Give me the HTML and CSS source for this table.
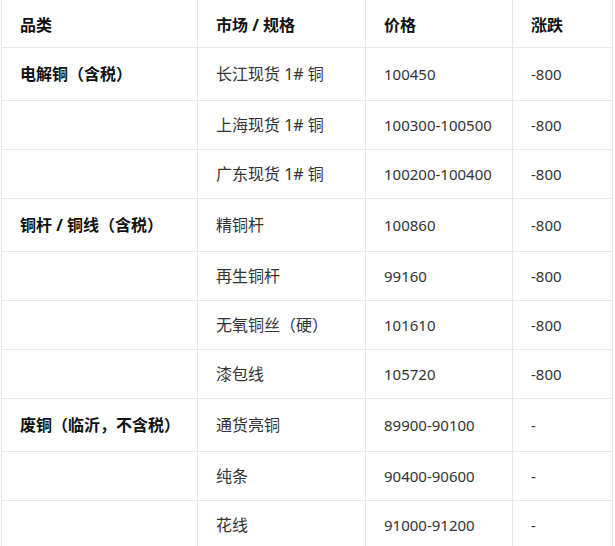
FILE: index.html
```html
<!DOCTYPE html>
<html lang="zh-CN">
<head>
<meta charset="utf-8">
<title>铜价</title>
<link rel="stylesheet" href="styles.css">
</head>
<body>
<table class="price-table">
  <colgroup>
    <col class="c1"><col class="c2"><col class="c3"><col class="c4">
  </colgroup>
  <thead>
    <tr><th>品类</th><th>市场 / 规格</th><th>价格</th><th>涨跌</th></tr>
  </thead>
  <tbody>
    <tr class="tall"><td class="cat">电解铜（含税）</td><td>长江现货 1# 铜</td><td class="num">100450</td><td class="num">-800</td></tr>
    <tr><td></td><td>上海现货 1# 铜</td><td class="num">100300-100500</td><td class="num">-800</td></tr>
    <tr><td></td><td>广东现货 1# 铜</td><td class="num">100200-100400</td><td class="num">-800</td></tr>
    <tr class="tall"><td class="cat">铜杆 / 铜线（含税）</td><td>精铜杆</td><td class="num">100860</td><td class="num">-800</td></tr>
    <tr><td></td><td>再生铜杆</td><td class="num">99160</td><td class="num">-800</td></tr>
    <tr><td></td><td>无氧铜丝（硬）</td><td class="num">101610</td><td class="num">-800</td></tr>
    <tr><td></td><td>漆包线</td><td class="num">105720</td><td class="num">-800</td></tr>
    <tr class="tall"><td class="cat">废铜（临沂，不含税）</td><td>通货亮铜</td><td class="num">89900-90100</td><td class="num">-</td></tr>
    <tr><td></td><td>纯条</td><td class="num">90400-90600</td><td class="num">-</td></tr>
    <tr><td></td><td>花线</td><td class="num">91000-91200</td><td class="num">-</td></tr>
  </tbody>
</table>
</body>
</html>
```

FILE: styles.css
```css
html, body {
  margin: 0;
  padding: 0;
  background: #fff;
}
body {
  font-family: "Noto Sans", "Noto Sans CJK SC", sans-serif;
  font-size: 16px;
  color: #333;
}
.price-table {
  margin-left: 1px;
  width: 611px;
  border-collapse: collapse;
  table-layout: fixed;
}
.c1 { width: 196px; }
.c2 { width: 168px; }
.c3 { width: 147px; }
.c4 { width: 100px; }
.price-table th,
.price-table td {
  border: 1px solid #e8e8e8;
  padding: 0 0 0 18px;
  text-align: left;
  vertical-align: middle;
  line-height: 20px;
  white-space: nowrap;
}
.price-table th {
  border-top: 0;
  height: 45px;
  padding-top: 2px;
  font-weight: 700;
  color: #111;
}
.price-table td {
  height: 48px;
}
.price-table td.num {
  font-size: 15px;
}
.price-table tr.tall td {
  height: 52px;
}
.price-table td.cat {
  font-weight: 700;
  color: #111;
}
```
